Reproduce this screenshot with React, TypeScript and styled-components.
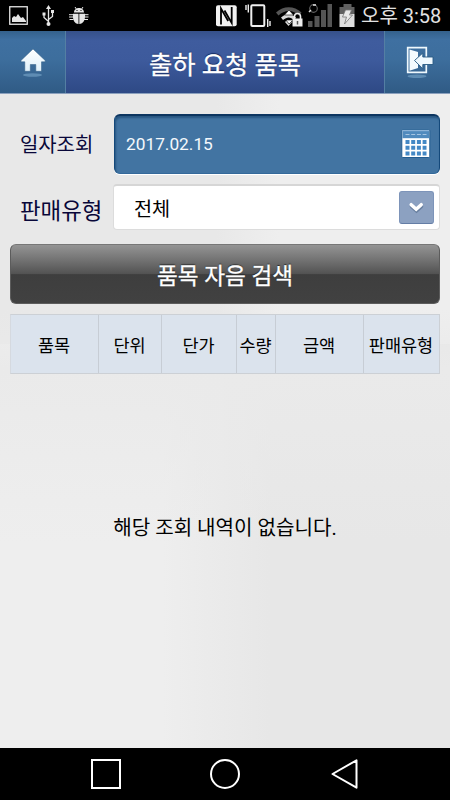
import React from "react";
import styled, { createGlobalStyle } from "styled-components";

const GlobalStyle = createGlobalStyle`
  * { box-sizing: border-box; }
  body { margin: 0; background: #000; }
  button { margin: 0; padding: 0; border: 0; font: inherit; }
`;

const Screen = styled.div`
  width: 450px;
  height: 800px;
  display: flex;
  flex-direction: column;
  overflow: hidden;
  font-family: Roboto, "Noto Sans CJK KR", sans-serif;
`;

const StatusBar = styled.div`
  height: 31px;
  flex: none;
  display: flex;
  justify-content: space-between;
  background: #000;
  color: #e2e2e2;
`;

const StatusIcons = styled.svg`
  display: block;
  height: 31px;
`;

const StatusRight = styled.div`
  display: flex;
`;

const Clock = styled.time`
  width: 90px;
  padding-left: 1px;
  font-size: 20px;
  line-height: 33px;
  white-space: nowrap;
`;

const Header = styled.header`
  height: 63px;
  flex: none;
  display: flex;
  border-bottom: 1px solid #8ba0bd;
`;

const HeaderButton = styled.button<{ $side: "left" | "right" }>`
  width: 66px;
  height: 62px;
  padding: 0;
  background: linear-gradient(#34618c 0, #3f70a1 14%, #3d6e9d 45%, #305b85 100%);
  border-left: ${(p) => (p.$side === "right" ? "1px solid #547fa3" : "0")};
  border-right: ${(p) => (p.$side === "left" ? "1px solid #547fa3" : "0")};

  svg { display: block; }
`;

const Title = styled.h1`
  flex: 1;
  margin: 0;
  background: linear-gradient(#36518a 0, #3f5c9e 16%, #3d5a9c 48%, #2e4985 100%);
  color: #fff;
  font-size: 25.3px;
  font-weight: 400;
  line-height: 69px;
  height: 62px;
  text-align: center;
  text-shadow: 0 -1px 1px #10265c;
  -webkit-text-stroke: 0.3px #fff;
`;

const Content = styled.main`
  flex: 1;
  display: flex;
  flex-direction: column;
  padding: 20px 10px 0;
  background:
    linear-gradient(transparent 215px, #eaeaea00 215px, #eaeaea 275px, #eaeaea00 450px),
    linear-gradient(90deg, #e8e8e8 0, #e8e8e8 48%, #eeeeee 62%, #eeeeee 100%) 0 0 / 100% 250px no-repeat,
    linear-gradient(90deg, #eeeeee 0, #eeeeee 36%, #e7e7e7 60%, #e7e7e7 100%);
`;

const Field = styled.div<{ $height: number }>`
  height: ${(p) => p.$height}px;
  display: flex;
  margin-bottom: 10px;
`;

const Label = styled.label<{ $size: number; $line: number }>`
  width: 103px;
  flex: none;
  padding-left: 10px;
  color: #090739;
  font-size: ${(p) => p.$size}px;
  line-height: ${(p) => p.$line}px;
  white-space: nowrap;
`;

const DateBox = styled.div`
  flex: 1;
  display: flex;
  align-items: center;
  justify-content: space-between;
  margin-left: 1px;
  padding: 0 8px 1px 11px;
  border: 1px solid #14497b;
  border-top: 2px solid #0c3560;
  border-bottom-color: #34699a;
  border-radius: 6px;
  background: #4274a2;
  box-shadow: inset 1px 2px 2px #285681, 0 1px 0 #fff;
  color: #f4f8fc;
  font-size: 17.3px;
`;

const SelectBox = styled.div`
  flex: 1;
  display: flex;
  align-items: center;
  justify-content: space-between;
  padding: 0 5px 0 20px;
  border: 1px solid #dcdcdc;
  border-top: 2px solid #d6d6d6;
  border-radius: 4px;
  background: #fff;
  color: #000;
  font-size: 19.7px;
`;

const SelectArrow = styled.span`
  width: 35px;
  height: 33px;
  border: 1px solid #7d94b9;
  border-bottom-color: #647da5;
  border-radius: 3px;
  background: #8ca1c1;

  svg { display: block; }
`;

const SearchButton = styled.button`
  height: 60px;
  flex: none;
  margin: 4px 0 10px;
  padding-top: 6px;
  border: 1px solid #5c5c5c;
  border-top-color: #777;
  border-radius: 6px;
  background: linear-gradient(#949494 0, #6d6d6d 30%, #525252 50%, #3e3e3e 51%, #414141 100%);
  color: #fff;
  font-size: 22.6px;
  line-height: 52px;
  text-shadow: 0 -1px 1px #222;
  -webkit-text-stroke: 0.3px #fff;
`;

const Table = styled.div`
  height: 60px;
  flex: none;
  display: grid;
  grid-template-columns: 88px 63px 75px 39px 88px 75px;
  grid-template-rows: 58px;
  border: 1px solid #ccd0d5;
  border-left-color: #d5d9df;
  background: #dbe3ed;
`;

const HeadCell = styled.div`
  color: #000;
  font-size: 17.5px;
  line-height: 62px;
  text-align: center;
  white-space: nowrap;
  border-right: 1px solid #c7cdd5;
  padding-right: 1px;

  &:last-child { border-right: 0; }
`;

const Empty = styled.p`
  margin: 139px 0 0;
  color: #000;
  font-size: 20.1px;
  line-height: 31px;
  text-align: center;
`;

const NavBar = styled.nav`
  height: 52px;
  flex: none;
  background: #000;

  svg { display: block; }
`;

const columns = ["품목", "단위", "단가", "수량", "금액", "판매유형"];

function NotificationIcons() {
  return (
    <StatusIcons width="100" viewBox="0 0 100 31">
      <g fill="none" stroke="#e6e6e6">
        <rect x="9.75" y="6.75" width="17.5" height="17.5" strokeWidth="1.3" />
        <path d="M48.5 8v16M44 14v3.5l4.5 4M52.5 12v4.5l-4 3" strokeWidth="1.3" />
        <path d="M69 14.7h4M69 17h4M69.5 19.5h4M84.5 14.7h4M84.5 17h4M84 19.5h4M75 7l2 3M83 7l-2 3" strokeWidth="1" />
      </g>
      <g fill="#e6e6e6">
        <path d="M12 22v-4l2-2 2 1 2-3 3 4 2-1 3 4v1z" />
        <path d="M48.5 5l-2.5 4h5zM42.5 12.5h3v3h-3zM51 10h3v3h-3z" />
        <circle cx="48.5" cy="24" r="2" />
        <path d="M74 12.5c0-6 10-6 10 0zM73 13.7h5.5V24c-4-.5-6-3.5-5.5-10.3zM79.3 13.7H85c.5 6.8-1.7 9.8-5.7 10.3z" />
      </g>
      <path d="M76.5 10.5h1M80.5 10.5h1" stroke="#000" />
    </StatusIcons>
  );
}

function SystemIcons() {
  return (
    <StatusIcons width="145" viewBox="215 0 145 31">
      <rect x="216" y="5.3" width="20.7" height="21" rx="2" fill="#f2f2f2" />
      <path d="M221 24.5V8.5l7.2 12.5M231.7 7v16l-7.2-12.5" fill="none" stroke="#000" strokeWidth="1.8" />
      <g fill="none" stroke="#eee">
        <rect x="251.3" y="5.3" width="13" height="20.7" rx="1" strokeWidth="2" />
        <path d="M248.3 4.5v8M246 5v5M267.7 19v8M270 21v5" strokeWidth="1.4" />
      </g>
      <path d="M276 12.5c7.5-7 18-7 25.5 0l-2.5 3c-6-6-14.5-6-20.5 0z" fill="#565656" />
      <path d="M281 17.5c4.5-4.5 10.5-4.5 15 0l-2 2.5c-3.5-3.5-7-3.5-11 0zM285 22c2-2 5-2 7 0l-3.500 4z" fill="#d8d8d8" />
      <path d="M289 10l-4.5 5h9zM289 24l-3-4h7z" fill="#fff" stroke="#000" strokeWidth=".6" />
      <path d="M294.5 19v-2.5a3 3 0 0 1 6 0V19" fill="none" stroke="#eee" strokeWidth="1.6" />
      <rect x="292.5" y="18.5" width="10" height="8" fill="#eee" />
      <path d="M297.5 21v3.5" stroke="#555" strokeWidth="1.5" />
      <path d="M308 21h4.5v6H308zM314.5 16h5v11h-5zM321 10h5v17h-5zM327.5 4h4.5v23h-4.5z" fill="#555" />
      <circle cx="313.5" cy="8.5" r="3.8" fill="none" stroke="#606060" strokeWidth="1.2" />
      <path d="M309 12l2-2M313 5h3" stroke="#ddd" strokeWidth="1.5" />
      <path d="M343.5 4h8v3h3v7h-15V7h4z" fill="#606060" />
      <path d="M339.5 14h15v13h-15z" fill="#dedede" />
      <path d="M345.5 10h6l-2 5h3l-8 9 2-7h-4z" fill="#e9e9e9" stroke="#777" strokeWidth=".8" />
    </StatusIcons>
  );
}

function HomeIcon() {
  return (
    <svg width="65" height="62" viewBox="0 31 65 62">
      <defs>
        <linearGradient id="homeFill" x2="0" y2="1"><stop stopColor="#fff" /><stop offset="1" stopColor="#dff0fa" /></linearGradient>
      </defs>
      <ellipse cx="32.5" cy="75" rx="9.5" ry="1.7" fill="#6c9abf" opacity=".75" />
      <path d="M33 49l12.2 11.5v1.3h-3.7v9.5h-5.7v-6.8h-5.5v6.8h-5.5v-9.5H21v-1.3z" fill="url(#homeFill)" stroke="#2e5c84" strokeWidth=".5" />
    </svg>
  );
}

function ExitIcon() {
  return (
    <svg width="65" height="62" viewBox="385 31 65 62">
      <ellipse cx="417" cy="76.3" rx="9.5" ry="1.7" fill="#6c9abf" opacity=".75" />
      <path d="M407.7 47.7h18.6v24.6h-18.6z" fill="none" stroke="#eef8fd" strokeWidth="1.7" />
      <path d="M409.5 49.5l8.5 2.5v16l-8.5 2.7z" fill="#f5fbff" />
      <path d="M414.5 60.5l8.3-7.5v4h10.2v7.5h-10.2v4.2z" fill="#f0f9ff" stroke="#285a83" strokeWidth=".9" />
    </svg>
  );
}

function CalendarIcon() {
  return (
    <svg width="30" height="30" viewBox="0 0 30 30">
      <rect x=".8" y=".8" width="28" height="27.7" rx="1" fill="#fff" stroke="#215c91" />
      <path d="M1.5 1.5h26.5v7.7H1.5z" fill="#508abd" />
      <path d="M1.5 1.7h26.5" stroke="#8fb5d9" />
      <path d="M4.5 5.5h21" stroke="#a5c5e2" strokeWidth="1" strokeDasharray="4 1.7" />
      <g stroke="#4388c5" strokeWidth="4" strokeDasharray="4 1.7">
        <path d="M4.5 13h21M4.5 18.7h21M4.5 24.4h21" />
      </g>
    </svg>
  );
}

export default function App() {
  return (
    <Screen>
      <GlobalStyle />
      <StatusBar>
        <NotificationIcons />
        <StatusRight>
          <SystemIcons />
          <Clock>오후 3:58</Clock>
        </StatusRight>
      </StatusBar>
      <Header>
        <HeaderButton $side="left" aria-label="홈"><HomeIcon /></HeaderButton>
        <Title>출하 요청 품목</Title>
        <HeaderButton $side="right" aria-label="나가기"><ExitIcon /></HeaderButton>
      </Header>
      <Content>
        <Field $height={60}>
          <Label $size={19.9} $line={64}>일자조회</Label>
          <DateBox>
            <span>2017.02.15</span>
            <CalendarIcon />
          </DateBox>
        </Field>
        <Field $height={46}>
          <Label $size={22.4} $line={55}>판매유형</Label>
          <SelectBox>
            <span>전체</span>
            <SelectArrow>
              <svg width="33" height="31" viewBox="0 0 33 31">
                <path d="M11.5 14.5l5 4.5 5-4.5" fill="none" stroke="#687f9f" strokeWidth="3.5" strokeLinecap="round" />
                <path d="M11.2 12.7l5 4.5 5-4.5" fill="none" stroke="#fff" strokeWidth="3.5" strokeLinecap="round" />
              </svg>
            </SelectArrow>
          </SelectBox>
        </Field>
        <SearchButton>품목 자음 검색</SearchButton>
        <Table>
          {columns.map((name) => (
            <HeadCell key={name}>{name}</HeadCell>
          ))}
        </Table>
        <Empty>해당 조회 내역이 없습니다.</Empty>
      </Content>
      <NavBar>
        <svg width="450" height="52" viewBox="0 748 450 52" fill="none" stroke="#fff" strokeWidth="2">
          <rect x="92" y="760" width="28" height="28" />
          <circle cx="225" cy="774" r="14" />
          <path d="M356.5 760.3v27.4L332.5 774z" strokeLinejoin="round" />
        </svg>
      </NavBar>
    </Screen>
  );
}
